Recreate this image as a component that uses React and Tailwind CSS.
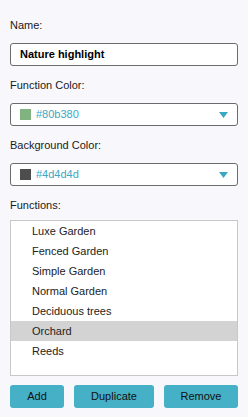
import React from 'react';

const functions = [
  'Luxe Garden',
  'Fenced Garden',
  'Simple Garden',
  'Normal Garden',
  'Deciduous trees',
  'Orchard',
  'Reeds',
];

const ColorSelect = ({ color }) => (
  <div className="flex items-center h-[23px] px-[9px] bg-white border border-[#6b6b6b] rounded-[3px]">
    <span className="w-[11px] h-[11px] shrink-0" style={{ backgroundColor: color }} />
    <span className="ml-[5px] text-[11px] text-[#3ba7c2] flex-1">{color}</span>
    <svg width="9" height="6" viewBox="0 0 9 6">
      <path d="M0 0 H9 L4.5 6 Z" fill="#3ba7c2" />
    </svg>
  </div>
);

const App = () => {
  const selected = 'Orchard';
  return (
    <div
      className="w-[248px] h-[417px] bg-[#f8f8fc] px-[10px] pt-[18px] text-[#1a1a1a]"
      style={{ fontFamily: '"Liberation Sans", Arial, sans-serif' }}
    >
      <div className="text-[11px] leading-[14px]">Name:</div>
      <div className="mt-[11px] flex items-center h-[23px] px-[9px] bg-white border border-[#6b6b6b] rounded-[3px]">
        <span className="text-[11px] font-bold text-black">Nature highlight</span>
      </div>

      <div className="mt-[12px] text-[11px] leading-[14px]">Function Color:</div>
      <div className="mt-[11px]">
        <ColorSelect color="#80b380" />
      </div>

      <div className="mt-[12px] text-[11px] leading-[14px]">Background Color:</div>
      <div className="mt-[11px]">
        <ColorSelect color="#4d4d4d" />
      </div>

      <div className="mt-[12px] text-[11px] leading-[14px]">Functions:</div>
      <div className="mt-[8px] h-[156px] bg-white border border-[#c8c8c8]">
        {functions.map((f) => (
          <div
            key={f}
            className={`h-[20px] flex items-center pl-[21px] text-[11px] text-[#222] ${
              f === selected ? 'bg-[#d3d3d3]' : ''
            }`}
          >
            {f}
          </div>
        ))}
      </div>

      <div className="mt-[9px] flex justify-between">
        <button type="button" className="w-[54px] h-[23px] rounded-[3px] bg-[#45b0c6] text-[11px] text-[#111]">
          Add
        </button>
        <button type="button" className="w-[80px] h-[23px] rounded-[3px] bg-[#45b0c6] text-[11px] text-[#111]">
          Duplicate
        </button>
        <button type="button" className="w-[74px] h-[23px] rounded-[3px] bg-[#45b0c6] text-[11px] text-[#111]">
          Remove
        </button>
      </div>
    </div>
  );
};

export default App;
